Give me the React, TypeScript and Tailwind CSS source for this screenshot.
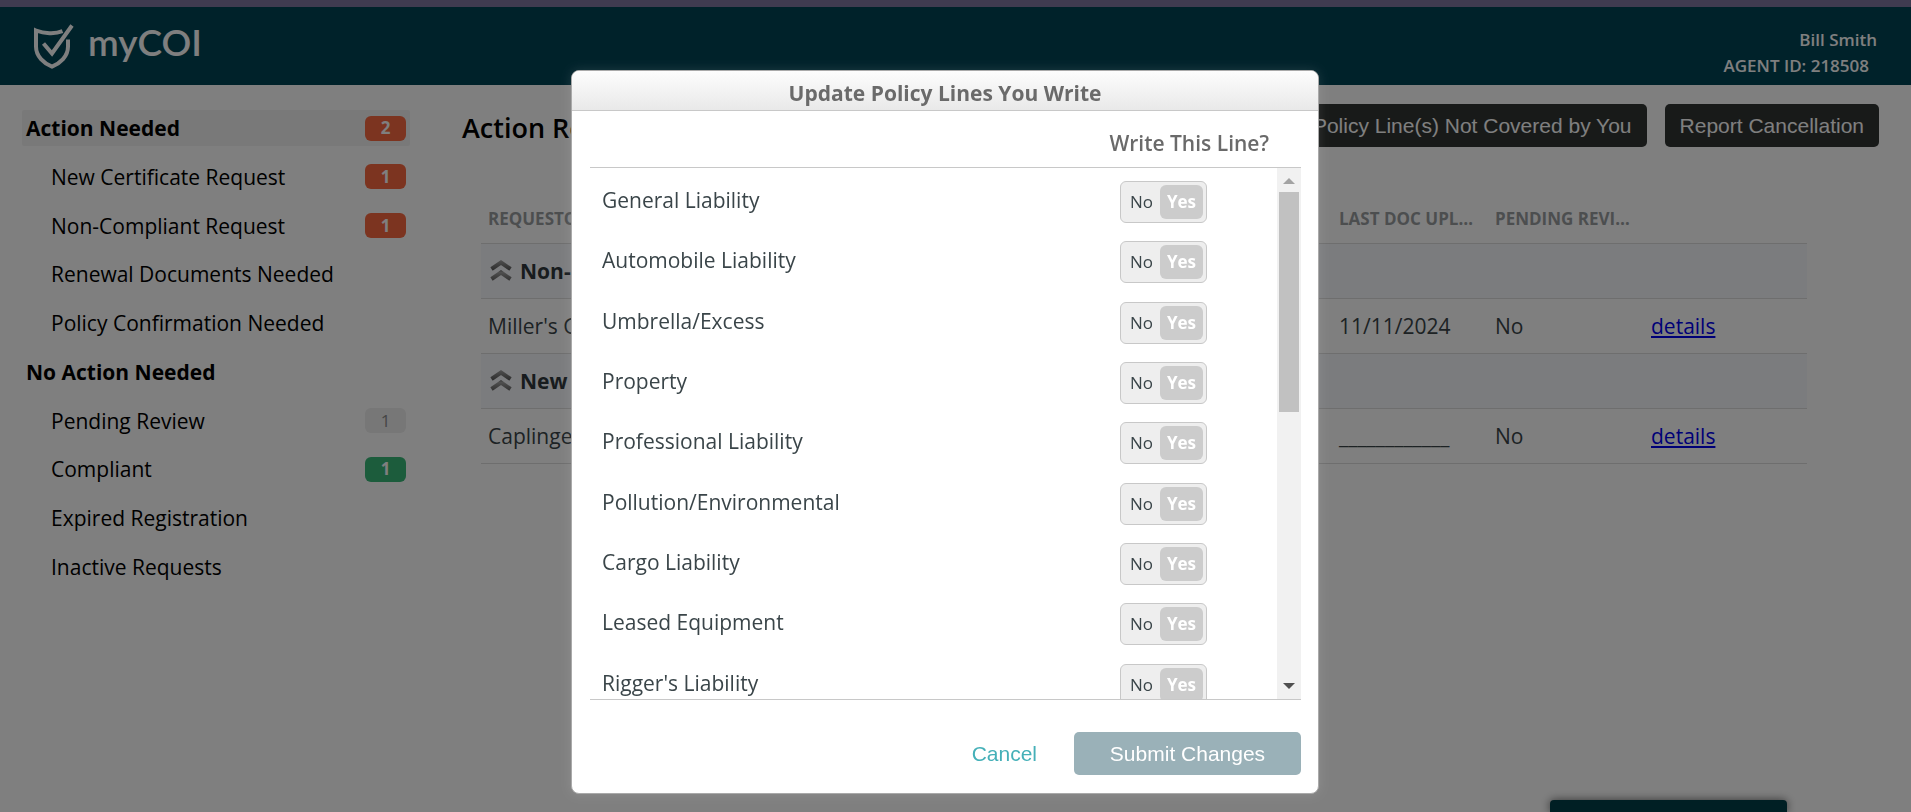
import React, { useState } from 'react';

interface NavItem {
  label: string;
  count?: number;
  tone?: 'alert' | 'muted' | 'success';
  heading?: boolean;
  active?: boolean;
}

const navItems: NavItem[] = [
  { label: 'Action Needed', count: 2, tone: 'alert', heading: true, active: true },
  { label: 'New Certificate Request', count: 1, tone: 'alert' },
  { label: 'Non-Compliant Request', count: 1, tone: 'alert' },
  { label: 'Renewal Documents Needed' },
  { label: 'Policy Confirmation Needed' },
  { label: 'No Action Needed', heading: true },
  { label: 'Pending Review', count: 1, tone: 'muted' },
  { label: 'Compliant', count: 1, tone: 'success' },
  { label: 'Expired Registration' },
  { label: 'Inactive Requests' },
];

const badgeTones = {
  alert: 'bg-[#f86840] text-white font-bold',
  muted: 'bg-[#eeeeee] text-[#8c8c8c]',
  success: 'bg-[#38b878] text-white font-bold',
};

const groups = [
  { title: 'Non-Compliant Request', requestor: "Miller's General", uploaded: '11/11/2024', pending: 'No' },
  { title: 'New Certificate Request', requestor: 'Caplinger', uploaded: '____________', pending: 'No' },
];

const policyLines = [
  'General Liability',
  'Automobile Liability',
  'Umbrella/Excess',
  'Property',
  'Professional Liability',
  'Pollution/Environmental',
  'Cargo Liability',
  'Leased Equipment',
  "Rigger's Liability",
];

const Logo: React.FC = () => (
  <div className="flex items-start gap-[14px]">
    <svg viewBox="0 0 40 45" className="h-[45px] w-10" fill="none" stroke="white" strokeWidth="4">
      <path d="M28.5 7.2C21 10.3 10 9.6 2 6.5V22.5C2 32.5 10 39.5 18 42.6C26 39.5 34 32.5 34 22.5V15.5" />
      <path d="M9.5 19.5L18 29.5L38 1.5" />
    </svg>
    <span className="pt-[2px] font-['Lato',sans-serif] text-[37px] leading-8 font-semibold text-white">myCOI</span>
  </div>
);

const Header: React.FC = () => (
  <header className="flex h-[85px] items-start justify-between border-t-7 border-[#7e76a0] bg-[#004455] px-[34px]">
    <div className="pt-[17px]">
      <Logo />
    </div>
    <div className="pt-5 text-right text-[17px] leading-[26px] font-semibold text-white">
      <p>Bill Smith</p>
      <p className="pr-2">AGENT ID: 218508</p>
    </div>
  </header>
);

const Sidebar: React.FC = () => (
  <nav className="flex h-[475px] w-[388px] shrink-0 flex-col justify-between">
    {navItems.map((item) => (
      <a
        key={item.label}
        href="#"
        className={`flex h-9 items-center justify-between rounded-xs pr-1 text-black ${
          item.heading ? 'pl-1 font-bold' : 'pl-[29px]'
        } ${item.active ? 'bg-[#f2f2f2]' : ''}`}
      >
        {item.label}
        {item.count && item.tone && (
          <span
            className={`flex h-[25px] w-[41px] items-center justify-center rounded-md text-[17px] ${badgeTones[item.tone]}`}
          >
            {item.count}
          </span>
        )}
      </a>
    ))}
  </nav>
);

const Chevrons: React.FC = () => (
  <svg viewBox="0 0 22 22" className="h-[22px] w-[22px]" fill="none" strokeWidth="4">
    <defs>
      <linearGradient id="chevron" x1="0" y1="0" x2="0" y2="22" gradientUnits="userSpaceOnUse">
        <stop offset="0" stopColor="#a0a0a0" />
        <stop offset="0.45" stopColor="#5c5c5c" />
        <stop offset="0.55" stopColor="#a0a0a0" />
        <stop offset="1" stopColor="#5c5c5c" />
      </linearGradient>
    </defs>
    <path stroke="url(#chevron)" d="M1.5 9L11 2.5L20.5 9M1.5 19L11 12.5L20.5 19" />
  </svg>
);

const RequestTable: React.FC = () => (
  <table className="w-full table-fixed border-collapse text-left text-[#3a4549]">
    <colgroup>
      <col />
      <col className="w-[156px]" />
      <col className="w-[156px]" />
      <col className="w-[163px]" />
    </colgroup>
    <thead>
      <tr className="h-12 border-b border-[#dcdcdc] text-[17px] text-[#999d9f] uppercase">
        <th className="truncate px-[7px] font-bold">Requestor</th>
        <th className="truncate px-[7px] font-bold">Last Doc Uploaded</th>
        <th className="truncate px-[7px] font-bold">Pending Review</th>
        <th />
      </tr>
    </thead>
    <tbody>
      {groups.map((group) => (
        <React.Fragment key={group.title}>
          <tr className="h-[55px] border-b border-[#dcdcdc] bg-[#f6f8fc]">
            <th colSpan={4} className="pl-[9px] font-bold text-[#30383c]">
              <span className="flex items-center gap-2">
                <Chevrons />
                {group.title}
              </span>
            </th>
          </tr>
          <tr className="h-[55px] border-b border-[#dcdcdc]">
            <td className="px-[7px]">{group.requestor}</td>
            <td className="px-[7px]">{group.uploaded}</td>
            <td className="px-[7px]">{group.pending}</td>
            <td className="px-[7px]">
              <a href="#" className="text-[#0000ee] underline">
                details
              </a>
            </td>
          </tr>
        </React.Fragment>
      ))}
    </tbody>
  </table>
);

const YesNoSwitch: React.FC<{ label: string }> = ({ label }) => {
  const [checked, setChecked] = useState(true);
  const on = 'rounded-md bg-[#cccccc] font-bold text-white';
  const off = 'text-[#3a4549]';

  return (
    <button
      type="button"
      role="switch"
      aria-checked={checked}
      aria-label={label}
      onClick={() => setChecked(!checked)}
      className="flex h-[42px] w-[87px] items-center rounded-md border border-[#c8c8c8] bg-[#eeeeee] pr-[3px] pl-[2px] text-[17px]"
    >
      <span className={`flex h-[34px] flex-1 items-center justify-center ${checked ? off : on}`}>No</span>
      <span className={`flex h-[34px] w-[43px] items-center justify-center ${checked ? on : off}`}>Yes</span>
    </button>
  );
};

const ScrollTrack: React.FC = () => (
  <div className="flex w-6 shrink-0 flex-col items-center bg-[#f1f1f1]">
    <button type="button" aria-label="Scroll up" className="flex h-6 w-6 items-center justify-center pt-[2px]">
      <svg viewBox="0 0 12 6" className="h-[6px] w-3" fill="#a3a3a3">
        <path d="M0 6L6 0L12 6Z" />
      </svg>
    </button>
    <div className="h-[220px] w-5 bg-[#c1c1c1]" />
    <button type="button" aria-label="Scroll down" className="mt-auto flex h-[26px] w-6 items-center justify-center">
      <svg viewBox="0 0 12 6" className="h-[6px] w-3" fill="#505050">
        <path d="M0 0L6 6L12 0Z" />
      </svg>
    </button>
  </div>
);

const PolicyLinesDialog: React.FC = () => (
  <div className="fixed inset-0 flex items-start justify-center bg-black/50 pt-[70px] pr-[21px]">
    <section
      role="dialog"
      aria-labelledby="dialog-title"
      className="w-[748px] overflow-hidden rounded-lg border border-[#aaaaaa] bg-white shadow-[0_0_12px_rgba(255,255,255,0.12)]"
    >
      <h2
        id="dialog-title"
        className="flex h-10 items-center justify-center border-b border-[#c8c8c8] bg-linear-to-b from-[#fdfdfd] to-[#e9e9e9] pt-1 font-bold text-[#6a6a6a]"
      >
        Update Policy Lines You Write
      </h2>
      <div className="pr-[17px] pb-[18px] pl-[18px]">
        <div className="flex h-[57px] items-center justify-end border-b border-[#c8c8c8] pt-2 pr-8 font-semibold text-[#6a6a6a]">
          Write This Line?
        </div>
        <div className="flex h-[532px] overflow-hidden border-b border-[#c8c8c8]">
          <ul className="grid h-[547px] flex-1 auto-rows-fr pt-1 text-[#3a4549]">
            {policyLines.map((line) => (
              <li key={line} className="flex items-center justify-between pr-[70px] pl-3">
                <span className="pb-1">{line}</span>
                <YesNoSwitch label={line} />
              </li>
            ))}
          </ul>
          <ScrollTrack />
        </div>
        <div className="mt-8 flex justify-end font-['Liberation_Sans',sans-serif]">
          <button type="button" className="h-[43px] px-[37px] text-[#45b0b8]">
            Cancel
          </button>
          <button type="button" className="h-[43px] w-[227px] rounded-[5px] bg-[#9ab1b8] text-white">
            Submit Changes
          </button>
        </div>
      </div>
    </section>
  </div>
);

export default function App() {
  return (
    <div className="min-h-screen bg-white font-['Open_Sans',sans-serif] text-[21px] leading-7">
      <Header />
      <div className="flex pl-[22px]">
        <div className="pt-[25px]">
          <Sidebar />
        </div>
        <main className="flex-1 pl-[52px]">
          <div className="flex items-start justify-between pt-[19px] pr-8">
            <h1 className="pt-[6px] text-[27px] leading-9 font-semibold">Action Required</h1>
            <div className="flex gap-[18px] font-['Liberation_Sans',sans-serif] text-white">
              <button type="button" className="h-[43px] rounded-[5px] bg-[#303432] px-[15px]">
                Report Policy Line(s) Not Covered by You
              </button>
              <button type="button" className="h-[43px] rounded-[5px] bg-[#303432] px-[15px]">
                Report Cancellation
              </button>
            </div>
          </div>
          <div className="mt-12 mr-[104px] ml-[19px]">
            <RequestTable />
          </div>
        </main>
      </div>
      <div className="fixed right-[124px] bottom-0 h-3 w-[237px] rounded-t bg-[#003e48] shadow-[0_0_10px_rgba(0,0,0,0.6)]" />
      <PolicyLinesDialog />
    </div>
  );
}
